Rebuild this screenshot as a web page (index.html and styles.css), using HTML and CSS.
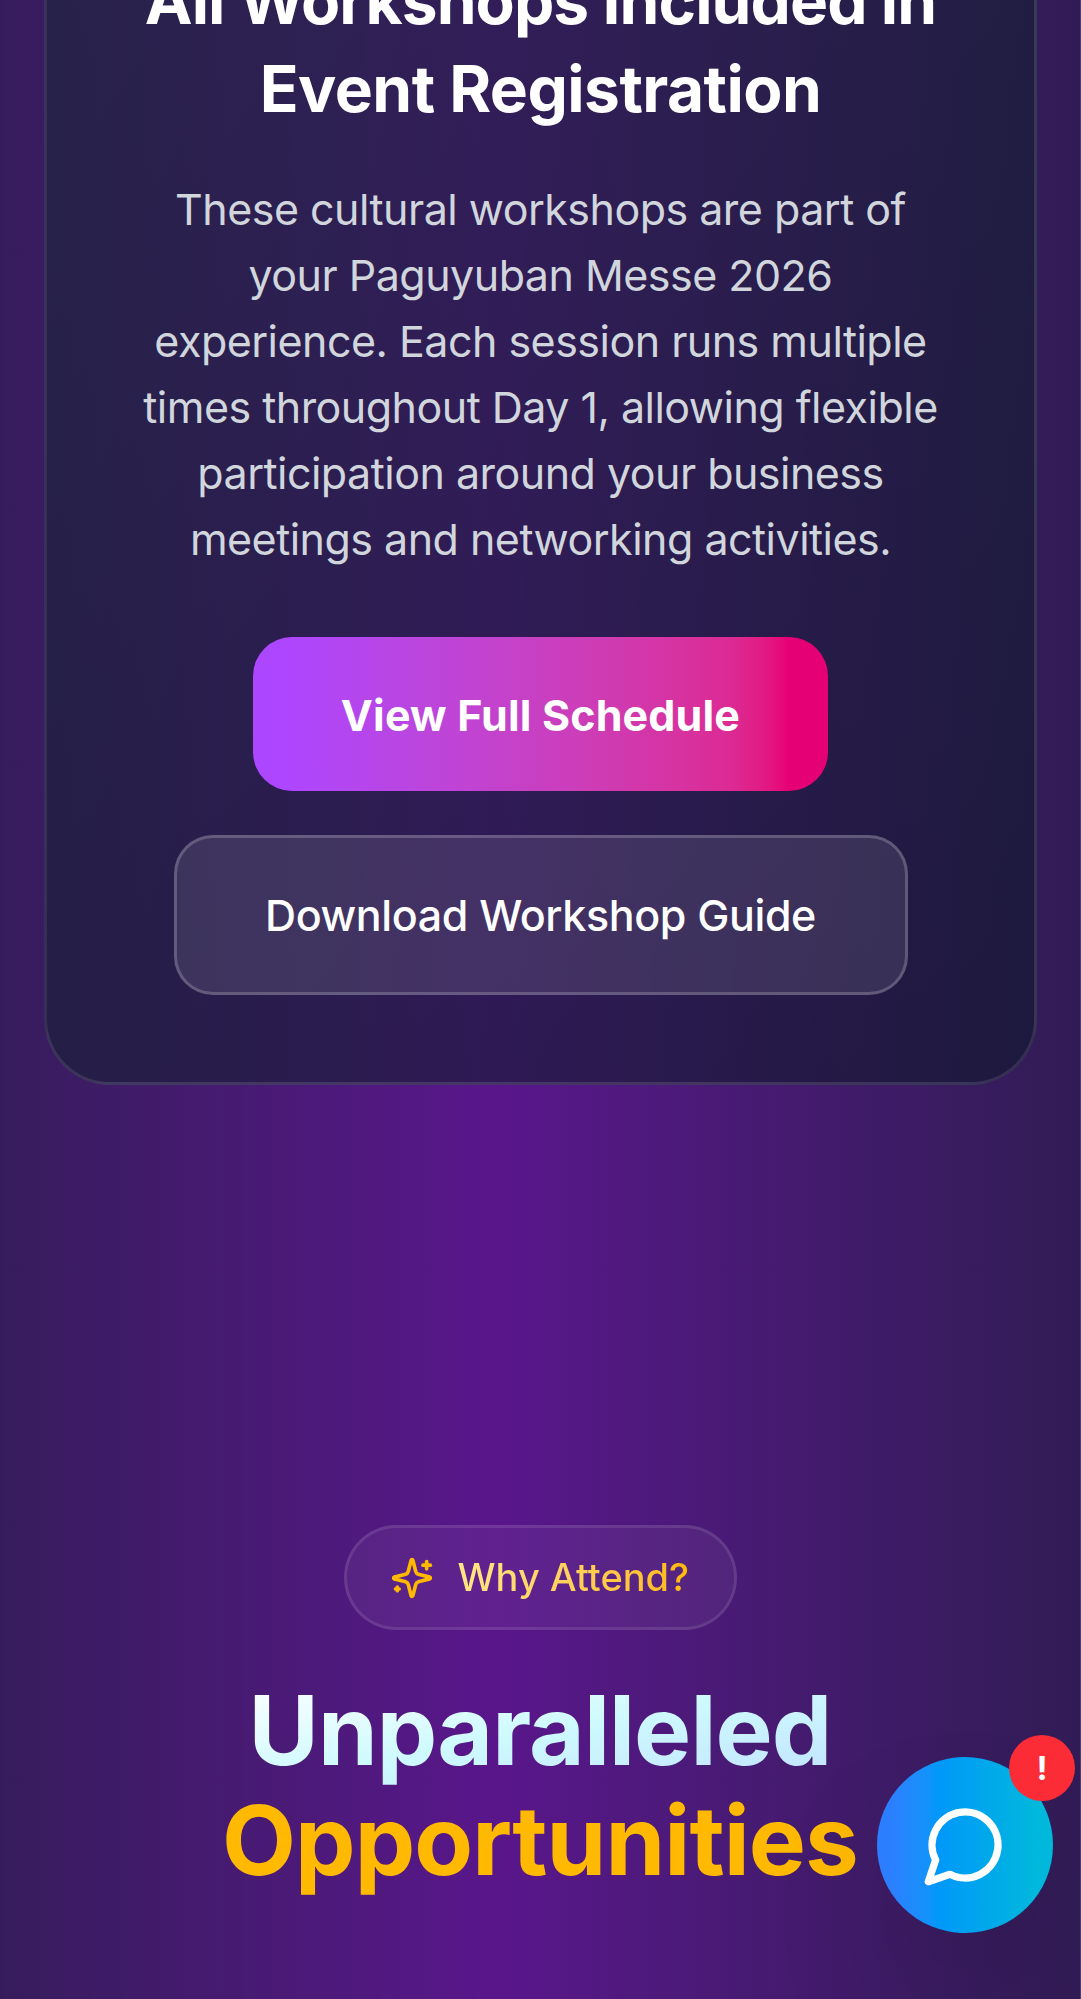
FILE: index.html
```html
<!DOCTYPE html>
<html lang="en">
<head>
<meta charset="utf-8">
<title>Paguyuban Messe 2026</title>
<link rel="stylesheet" href="styles.css">
</head>
<body>
<main class="page">
  <section class="workshops">
    <div class="card">
      <h3 class="card-title"><span class="card-title-lead">All Workshops Included in</span><br>Event Registration</h3>
      <p class="card-text">These cultural workshops are part of your Paguyuban Messe 2026 experience. Each session runs multiple times throughout Day 1, allowing flexible participation around your business meetings and networking activities.</p>
      <div class="actions">
        <button class="btn btn-primary">View Full Schedule</button>
        <button class="btn btn-secondary">Download Workshop Guide</button>
      </div>
    </div>
  </section>
  <section class="attend">
    <div class="pill">
      <svg class="pill-icon" viewBox="0 0 24 24" fill="none" stroke="currentColor" stroke-width="2" stroke-linecap="round" stroke-linejoin="round"><path d="M9.937 15.5A2 2 0 0 0 8.5 14.063l-6.135-1.582a.5.5 0 0 1 0-.962L8.5 9.936A2 2 0 0 0 9.937 8.5l1.582-6.135a.5.5 0 0 1 .963 0L14.063 8.5A2 2 0 0 0 15.5 9.937l6.135 1.581a.5.5 0 0 1 0 .964L15.5 14.063a2 2 0 0 0-1.437 1.437l-1.582 6.135a.5.5 0 0 1-.963 0z"/><path d="M20 3v4"/><path d="M22 5h-4"/><path d="M4 17v2"/><path d="M5 18H3"/></svg>
      <span class="pill-text">Why Attend?</span>
    </div>
    <h2 class="headline"><span class="line-ice">Unparalleled</span><span class="line-gold">Opportunities</span></h2>
  </section>
</main>
<button class="chat" aria-label="Open chat">
  <svg class="chat-icon" viewBox="0 0 24 24" fill="none" stroke="currentColor" stroke-width="2" stroke-linecap="round" stroke-linejoin="round"><path d="M7.9 20A9 9 0 1 0 4 16.1L2 22Z"/></svg>
  <span class="chat-badge">!</span>
</button>
</body>
</html>
```
FILE: styles.css
```css
* { box-sizing: border-box; margin: 0; }

html { overflow: hidden; }

body {
  height: 1999px;
  overflow: hidden;
  font-family: Inter, "Liberation Sans", sans-serif;
  color: #fff;
  background: #2f1b52;
}

.page {
  height: 1999px;
  overflow: hidden;
  background: linear-gradient(90deg in oklab, #0f172b -54%, #59168b 46%, #0f172b 146%);
  border-right: 1px solid #4f3d6c;
}

.workshops { padding: 0 43px 0 44px; }

.card {
  display: flex;
  flex-direction: column;
  align-items: center;
  margin-top: -141px;
  padding: 95px 0 0;
  height: 1226px;
  border: 3px solid rgba(255, 255, 255, 0.1);
  border-radius: 66px;
  background: linear-gradient(to bottom right, rgba(29, 41, 61, 0.6), rgba(15, 23, 43, 0.6));
  text-align: center;
}

.card-title {
  font-size: 64px;
  line-height: 88px;
  font-weight: 700;
  letter-spacing: -0.55px;
  white-space: nowrap;
}

.card-title-lead { letter-spacing: -0.92px; }

.card-text {
  width: 816px;
  margin-top: 43px;
  font-size: 43px;
  line-height: 66px;
  letter-spacing: -0.52px;
  color: #d1d5dc;
}

.actions {
  display: flex;
  flex-direction: column;
  align-items: center;
  gap: 44px;
  margin-top: 65px;
}

.btn {
  font-family: inherit;
  font-size: 43px;
  line-height: 66px;
  color: #fff;
  border: 0;
  border-radius: 39px;
  white-space: nowrap;
}

.btn-primary {
  width: 575px;
  height: 154px;
  padding-top: 2px;
  font-weight: 700;
  letter-spacing: 0.15px;
  background: linear-gradient(90deg in oklab, #ad46ff 5%, #dc2a94 83%, #e60076 93%);
}

.btn-secondary {
  width: 734px;
  height: 160px;
  font-weight: 500;
  letter-spacing: -0.37px;
  border: 3px solid rgba(255, 255, 255, 0.2);
  background: rgba(255, 255, 255, 0.1);
}

.attend {
  display: flex;
  flex-direction: column;
  align-items: center;
  padding-top: 440px;
}

.pill {
  display: flex;
  align-items: center;
  gap: 24px;
  width: 393px;
  height: 105px;
  padding-left: 43px;
  border: 3px solid rgba(255, 255, 255, 0.1);
  border-radius: 53px;
  background: rgba(255, 255, 255, 0.05);
}

.pill-icon { width: 44px; height: 44px; color: #ffb900; }

.pill-text {
  font-size: 38px;
  line-height: 55px;
  font-weight: 500;
  color: transparent;
  background: linear-gradient(90deg in oklab, #fee685, #ffb900);
  background-clip: text;
}

.headline {
  display: flex;
  flex-direction: column;
  align-items: center;
  margin-top: 45px;
  font-size: 96px;
  line-height: 110px;
  font-weight: 700;
  letter-spacing: -0.9px;
}

.line-ice {
  color: transparent;
  background: linear-gradient(to bottom right in oklab, #fff, #cefafe 50%, #bedbff 115%);
  background-clip: text;
}

.line-gold { color: #ffb900; }

.chat {
  position: fixed;
  left: 877px;
  top: 1757px;
  display: flex;
  align-items: center;
  justify-content: center;
  width: 176px;
  height: 176px;
  padding: 0;
  border: 0;
  border-radius: 50%;
  color: #fff;
  background: linear-gradient(90deg in oklab, #2b7fff 8%, #0098f9 35%, #00b8db 92%);
  box-shadow: 0 69px 138px -33px rgba(0, 0, 0, 0.25);
}

.chat-icon { width: 88px; height: 88px; }

.chat-badge {
  position: absolute;
  top: -22px;
  right: -22px;
  width: 66px;
  height: 66px;
  border-radius: 50%;
  background: #fb2c36;
  font: 700 33px/66px Inter, sans-serif;
  text-align: center;
}
```
